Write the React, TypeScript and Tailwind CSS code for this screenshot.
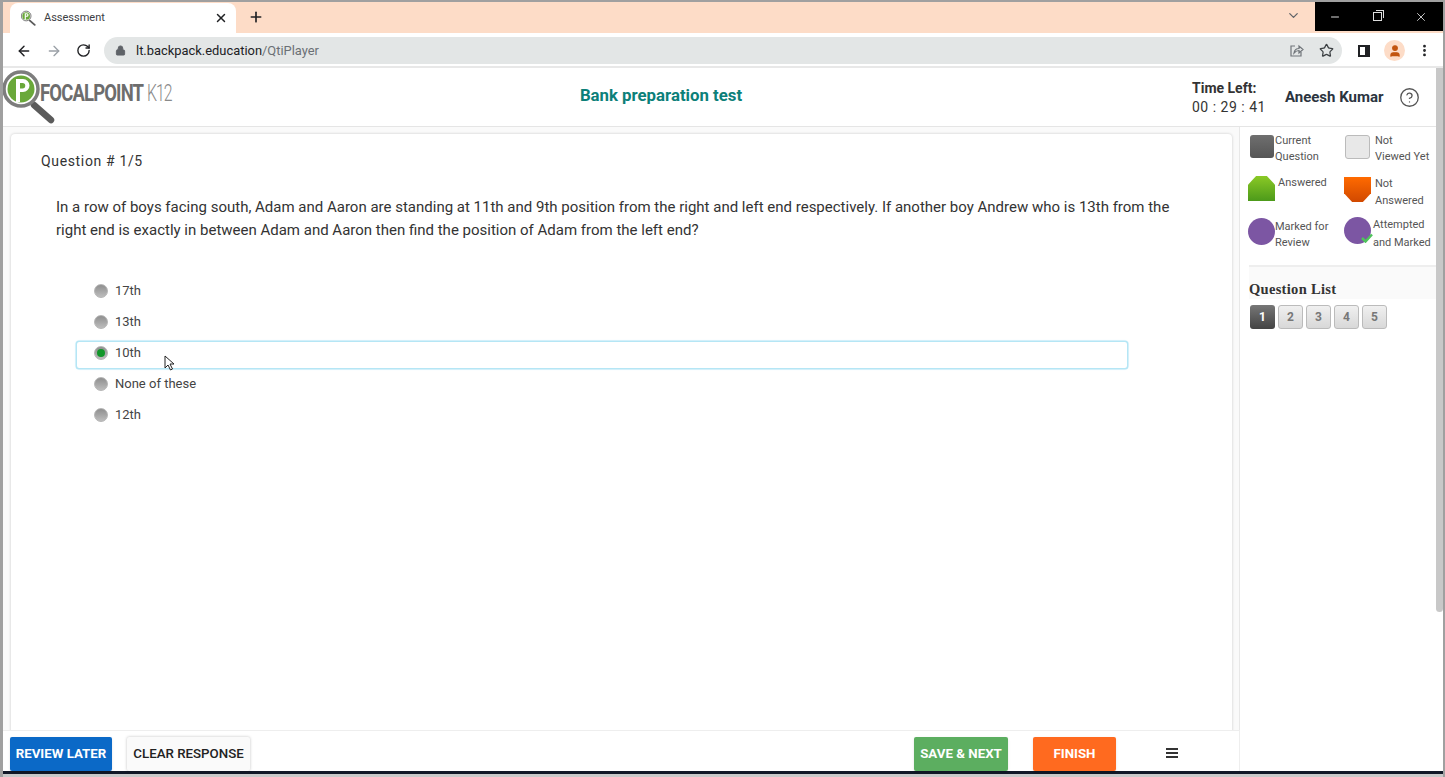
import { ArrowLeft, ArrowRight, ChevronDown, HelpCircle, Lock, Minus, MoreVertical, Plus, RotateCw, Star, User, X } from "lucide-react";

const OPTIONS = ["17th", "13th", "10th", "None of these", "12th"];

function Logo({ size }: { size: number }) {
  return (
    <svg width={size} height={size} viewBox="0 0 56 56" className="shrink-0">
      <path d="M31 37 L48 52" stroke="#5b5b5b" strokeWidth="6.5" strokeLinecap="round" />
      <circle cx="18" cy="21" r="17" fill="#fff" stroke="#7d7d7d" strokeWidth="3.5" />
      <circle cx="18" cy="21" r="13.5" fill="#6aa83a" />
      <path d="M13 34 V11 H20 A6.5 6.5 0 0 1 20 24 H17 V34 Z" fill="#fff" />
      <path d="M17 15 H19.5 A2.5 2.5 0 0 1 19.5 20.5 H17 Z" fill="#6aa83a" />
    </svg>
  );
}

function ShareIcon() {
  return (
    <svg width="15" height="15" viewBox="0 0 15 15" fill="none" stroke="#70757a" strokeWidth="1.2" className="mr-[15px] ml-auto">
      <path d="M6 3 H2 V13 H12 V9" />
      <path d="M5 10 C5.5 7 7.5 5.5 10 5.5 V3 L14 6.5 L10 10 V7.5 C8 7.5 6.5 8.3 5 10 Z" />
    </svg>
  );
}

function BrowserChrome() {
  return (
    <div className="shrink-0">
      <div className="flex h-[31px] bg-[#fddcc7]">
        <div className="mt-px ml-[7px] flex h-[30px] w-[226px] items-center rounded-t-lg bg-white pr-2 pl-[11px]">
          <Logo size={16} />
          <span className="ml-[7px] flex-1 text-[11px] text-[#3c4043]">Assessment</span>
          <X size={14} strokeWidth={2.5} className="text-[#202124]" />
        </div>
        <Plus size={16} strokeWidth={2.5} className="mt-[7px] ml-[12px] text-[#202124]" />
        <ChevronDown size={15} className="mt-[6px] ml-auto text-[#5f6368]" />
        <div className="ml-[14px] flex h-[29px] w-[128px] items-center justify-between self-start bg-black pr-[15px] pl-[14px] text-[#ddd]">
          <Minus size={12} />
          <div className="relative h-[9px] w-[9px] border border-[#ddd] bg-black">
            <div className="absolute -top-[3px] -right-[3px] h-[8px] w-[8px] border-t border-r border-[#ddd]" />
          </div>
          <X size={14} strokeWidth={1.5} />
        </div>
      </div>
      <div className="flex h-[35px] items-center border-b-2 border-[#e8e8e8] bg-white pt-[2px] text-[#3c4043]">
        <ArrowLeft size={16} strokeWidth={2.2} className="ml-[13px] text-[#202124]" />
        <ArrowRight size={16} className="ml-[14px] text-[#9aa0a6]" />
        <RotateCw size={15} strokeWidth={2.2} className="ml-[14px] text-[#202124]" />
        <div className="ml-[13px] flex h-[27px] w-[1238px] items-center rounded-full bg-[#e3e6e6] pl-[11px]">
          <Lock size={11} fill="#5f6368" className="text-[#5f6368]" />
          <span className="mt-px ml-[10px] text-[12.9px] text-[#202124]">
            lt.backpack.education<span className="text-[#6b7075]">/QtiPlayer</span>
          </span>
          <ShareIcon />
          <Star size={15} className="mr-[8px] text-[#3c4043]" />
        </div>
        <div className="ml-[16px] h-[12px] w-[12px] border-2 border-r-[5px] border-[#202124] bg-white" />
        <div className="ml-[14px] flex h-[21px] w-[21px] items-center justify-center rounded-full bg-[#fddcc7]">
          <User size={14} fill="#c2540e" className="text-[#c2540e]" />
        </div>
        <MoreVertical size={15} strokeWidth={2.5} className="ml-[12px] text-[#202124]" />
      </div>
    </div>
  );
}

function AppHeader() {
  return (
    <div className="flex h-[59px] shrink-0 items-center border-b border-[#e5e5e5] bg-white">
      <div className="flex w-[320px] items-start self-start">
        <Logo size={56} />
        <span className="mt-[12px] -ml-[19px] w-[107px] origin-left scale-x-[0.77] text-[24px] leading-[26px] font-bold tracking-[-1.1px] whitespace-nowrap text-[#6d6d6d]">FOCALPOINT</span>
        <span className="mt-[12px] origin-left scale-x-[0.66] text-[24px] leading-[26px] font-light tracking-[-1.5px] text-[#8a8a8a]">K12</span>
      </div>
      <div className="mb-[2px] w-[676px] text-center text-[16.8px] font-bold text-[#0c8079]">Bank preparation test</div>
      <div className="mt-[2px] ml-[193px] text-[14px] leading-[19px] text-[#333]">
        <div className="font-bold">Time Left:</div>
        <div className="tracking-[0.5px]">00 : 29 : 41</div>
      </div>
      <span className="ml-[19px] text-[15px] font-bold text-[#2b3440]">Aneesh Kumar</span>
      <HelpCircle size={21} strokeWidth={1.5} className="ml-[16px] text-[#555]" />
    </div>
  );
}

function Question() {
  return (
    <div className="h-full w-[1221px] rounded-sm bg-white pt-[17px] pl-[30px] shadow-[0_0_3px_rgba(0,0,0,0.2)]">
      <div className="text-[14px] leading-[20px] tracking-[0.65px] text-[#333]">Question # 1/5</div>
      <p className="mt-[25px] ml-[15px] w-[1125px] text-[15px] leading-[22.5px] text-[#333]">
        In a row of boys facing south, Adam and Aaron are standing at 11th and 9th position from the right and left end respectively. If another boy Andrew who is 13th from the right end is exactly in between Adam and Aaron then find the position of Adam from the left end?
      </p>
      <div className="mt-[40px] ml-[35px] w-[1052px]">
        {OPTIONS.map((o) => {
          const active = o === "10th";
          return (
            <div key={o} className="relative flex h-[31px] items-start pl-[18px]">
              {active && (
                <div className="absolute inset-x-[1px] -top-px h-[26px] rounded-[2px] shadow-[0_0_0_1.5px_#b5e6f5,0_0_3px_#a8e0f2]" />
              )}
              <div className="mt-[3px] flex h-[14px] w-[14px] items-center justify-center rounded-full border border-[#b5b5b5] bg-gradient-to-b from-[#8f8f8f] to-[#bdbdbd]">
                {active && <div className="h-[8px] w-[8px] rounded-full bg-[#12962a]" />}
              </div>
              <span className="ml-[7px] text-[13px] leading-[20px] text-[#444]">{o}</span>
              {active && (
                <svg width="12" height="16" viewBox="0 0 12 16" className="absolute top-[12px] left-[88px]">
                  <path d="M1 1 V13 L4 10 L6.5 15 L8.5 14 L6 9 H10 Z" fill="#fff" stroke="#222" strokeWidth="1" />
                </svg>
              )}
            </div>
          );
        })}
      </div>
    </div>
  );
}

function Legend({ icon, label, textClass }: { icon: React.ReactNode; label: string[]; textClass: string }) {
  return (
    <div className="flex h-[43px] items-start">
      <div className="flex w-[27px] shrink-0 justify-center">{icon}</div>
      <div className={textClass}>
        {label.map((l) => (
          <div key={l}>{l}</div>
        ))}
      </div>
    </div>
  );
}

function Sidebar() {
  return (
    <aside className="flex-1 border-l border-[#e8e8e8] bg-white pt-[5px]">
      <div className="grid grid-cols-[96px_1fr] pr-1 pl-[8px]">
        <Legend
          icon={<div className="mt-[3px] h-[23px] w-[24px] rounded-[3px] bg-gradient-to-b from-[#6f6f6f] to-[#555]" />}
          label={["Current", "Question"]}
          textClass="mt-px text-[11px] leading-[16px] text-[#555]"
        />
        <Legend
          icon={<div className="mt-[3px] h-[24px] w-[25px] rounded-[3px] border border-[#bbb] bg-[#e8e8e8]" />}
          label={["Not", "Viewed Yet"]}
          textClass="mt-px ml-[4px] text-[11px] leading-[16px] text-[#555]"
        />
        <Legend
          icon={<div className="mt-px h-[25px] w-[28px] bg-gradient-to-b from-[#8ac926] to-[#4c9a1a] [clip-path:polygon(30%_0,70%_0,100%_35%,100%_100%,0_100%,0_35%)]" />}
          label={["Answered"]}
          textClass="ml-[3px] text-[11px] leading-[16px] text-[#555]"
        />
        <Legend
          icon={<div className="mt-[2px] h-[25px] w-[28px] bg-gradient-to-b from-[#ff6a00] to-[#d14900] [clip-path:polygon(0_0,100%_0,100%_65%,70%_100%,30%_100%,0_65%)]" />}
          label={["Not", "Answered"]}
          textClass="ml-[4px] text-[11px] leading-[17px] text-[#555]"
        />
        <Legend
          icon={<div className="h-[27px] w-[27px] rounded-full bg-[#7c56a3]" />}
          label={["Marked for", "Review"]}
          textClass="mt-px text-[11px] leading-[16px] text-[#555]"
        />
        <Legend
          icon={
            <div className="relative -mt-px -ml-[1px] h-[27px] w-[27px] rounded-full bg-[#7c56a3]">
              <svg width="12" height="10" viewBox="0 0 12 10" className="absolute right-[-2px] bottom-[1px]">
                <path d="M1 5 L4.5 8.5 L11 1.5" fill="none" stroke="#4fc35c" strokeWidth="2.5" />
              </svg>
            </div>
          }
          label={["Attempted", "and Marked"]}
          textClass="-mt-[2px] ml-[2px] text-[11px] leading-[17.5px] text-[#555]"
        />
      </div>
      <div className="mt-[4px] ml-[9px] border-t-2 border-[#eee] bg-[#fafafa] pt-[12px] font-['Liberation_Serif',serif] text-[14.5px] leading-[20px] font-bold tracking-[0.3px] text-[#333]">
        Question List
      </div>
      <div className="mt-[6px] ml-[10px] flex gap-[3px]">
        {[1, 2, 3, 4, 5].map((n) => (
          <div
            key={n}
            className={
              n === 1
                ? "flex h-[24px] w-[25px] items-center justify-center rounded-[3px] bg-gradient-to-b from-[#777] to-[#444] text-[12px] font-bold text-white"
                : "flex h-[24px] w-[25px] items-center justify-center rounded-[3px] border border-[#bbb] bg-gradient-to-b from-[#f0f0f0] to-[#d8d8d8] text-[12px] font-bold text-[#777]"
            }
          >
            {n}
          </div>
        ))}
      </div>
    </aside>
  );
}

function Footer() {
  return (
    <div className="flex h-[41px] shrink-0 bg-white">
      <div className="flex w-[1237px] items-start border-t border-r border-[#eee] pt-[6px] pl-[7px] text-[13.3px] font-medium">
        <button className="h-[34px] w-[102px] rounded-[2px] bg-[#0b69c7] font-bold text-white shadow-sm">REVIEW LATER</button>
        <button className="ml-[15px] h-[34px] w-[123px] rounded-[2px] bg-[#fafafa] text-[#222] shadow-[0_0_3px_rgba(0,0,0,0.25)]">CLEAR RESPONSE</button>
        <button className="ml-[664px] h-[34px] w-[94px] rounded-[2px] bg-[#5cae60] font-bold text-white shadow-sm">SAVE &amp; NEXT</button>
        <button className="ml-[25px] h-[34px] w-[83px] rounded-[2px] bg-[#ff6a1f] font-bold text-white shadow-sm">FINISH</button>
        <div className="mt-[11px] ml-[50px] flex w-[12px] flex-col gap-[2px]">
          <div className="h-[2px] bg-[#333]" />
          <div className="h-[2px] bg-[#333]" />
          <div className="h-[2px] bg-[#333]" />
        </div>
      </div>
    </div>
  );
}

export default function App() {
  return (
    <div className="flex h-[777px] w-[1445px] flex-col overflow-hidden border-t-2 border-r-2 border-l-[3px] border-[#a0a0a0] bg-[#c9c9c9] font-['Roboto','Liberation_Sans',sans-serif]">
      <BrowserChrome />
      <div className="relative flex min-h-0 flex-1 flex-col">
        <AppHeader />
        <div className="flex min-h-0 flex-1">
          <div className="w-[1236px] shrink-0 overflow-hidden bg-[#fafafa] pt-[7px] pl-[8px]">
            <div className="h-[700px]">
              <Question />
            </div>
          </div>
          <Sidebar />
        </div>
        <Footer />
        {/* page scrollbar thumb */}
        <div className="absolute top-0 right-0 z-10 h-[544px] w-[7px] rounded-b-sm bg-[#c8c8c8]" />
      </div>
      <div className="h-[3px] shrink-0 bg-[#111827]" />
      <div className="h-[3px] shrink-0 bg-[#c9c9c9]" />
    </div>
  );
}
